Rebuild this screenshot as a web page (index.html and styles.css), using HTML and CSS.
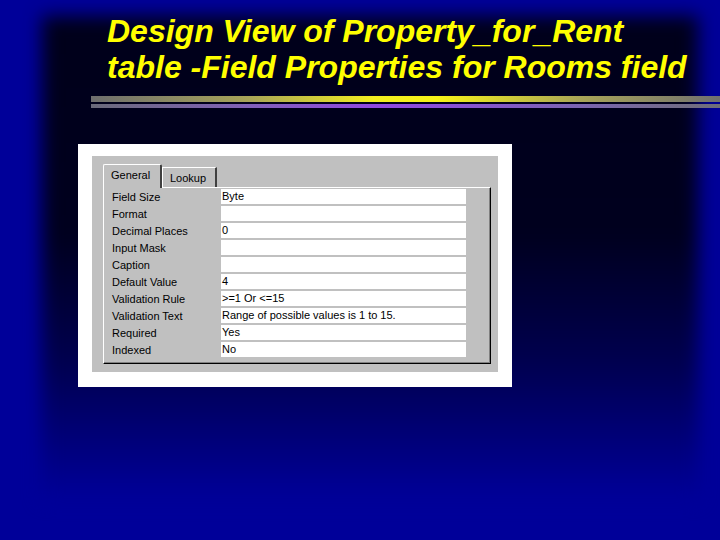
FILE: index.html
```html
<!DOCTYPE html>
<html>
<head>
<meta charset="utf-8">
<link rel="stylesheet" href="styles.css">
</head>
<body>
<div class="slide">
  <div class="content">
    <h1 class="title">Design View of Property_for_Rent<br>table -Field Properties for Rooms field</h1>
    <div class="bars">
      <div class="bar bar-yellow"></div>
      <div class="bar bar-purple"></div>
    </div>
    <div class="shot">
      <div class="dialog">
        <div class="tabs">
          <div class="tab tab-active">General</div>
          <div class="tab">Lookup</div>
        </div>
        <div class="panel">
          <div class="row"><span class="label">Field Size</span><span class="value">Byte</span></div>
          <div class="row"><span class="label">Format</span><span class="value"></span></div>
          <div class="row"><span class="label">Decimal Places</span><span class="value">0</span></div>
          <div class="row"><span class="label">Input Mask</span><span class="value"></span></div>
          <div class="row"><span class="label">Caption</span><span class="value"></span></div>
          <div class="row"><span class="label">Default Value</span><span class="value">4</span></div>
          <div class="row"><span class="label">Validation Rule</span><span class="value">&gt;=1 Or &lt;=15</span></div>
          <div class="row"><span class="label">Validation Text</span><span class="value">Range of possible values is 1 to 15.</span></div>
          <div class="row"><span class="label">Required</span><span class="value">Yes</span></div>
          <div class="row"><span class="label">Indexed</span><span class="value">No</span></div>
        </div>
      </div>
    </div>
  </div>
</div>
</body>
</html>
```

FILE: styles.css
```css
html, body {
  margin: 0;
  padding: 0;
  background: #000099;
}

.slide {
  position: relative;
  width: 720px;
  height: 540px;
  overflow: hidden;
  background: #000099;
}

.slide::before {
  content: "";
  position: absolute;
  left: 42px;
  top: 16px;
  right: 22px;
  bottom: 40px;
  background: linear-gradient(to bottom, #00001a 0%, #00001e 45%, #000050 72%, #000099 100%);
  filter: blur(9px);
}

.content {
  position: relative;
}

.title {
  margin: 0;
  padding: 13px 0 0 107px;
  font-family: "Liberation Sans", Arial, sans-serif;
  font-weight: bold;
  font-style: italic;
  font-size: 32px;
  line-height: 36px;
  color: #ffff00;
  white-space: nowrap;
}

.bars {
  margin: 11px 0 0 91px;
  display: flex;
  flex-direction: column;
  gap: 2px;
}

.bar-yellow {
  height: 6px;
  background: linear-gradient(to right, #6e6e6e 0%, #a8a458 25%, #f2ee20 45%, #f6f218 55%, #a8a458 78%, #707070 100%);
}

.bar-purple {
  height: 4px;
  background: linear-gradient(to right, #6a6a7a 0%, #8060b8 25%, #9048e0 45%, #8a4ed8 55%, #7a64b0 78%, #6e6e78 100%);
}

.shot {
  margin: 36px 0 0 78px;
  width: 434px;
  background: #ffffff;
  padding: 12px 14px 15px 14px;
  box-sizing: border-box;
}

.dialog {
  background: #c0c0c0;
  padding: 8px 7px 8px 11px;
  font-family: "Liberation Sans", Arial, sans-serif;
  font-size: 11px;
  color: #000;
}

.tabs {
  display: flex;
  align-items: flex-end;
  height: 23px;
}

.tab {
  height: 20px;
  line-height: 20px;
  padding: 0 7px;
  border-top: 1px solid #ffffff;
  border-left: 1px solid #ffffff;
  border-right: 2px solid #404040;
  box-sizing: border-box;
  width: 55px;
}

.tab-active {
  height: 24px;
  line-height: 20px;
  width: 59px;
  margin-bottom: -1px;
  background: #c0c0c0;
  position: relative;
  z-index: 1;
  border-radius: 2px 2px 0 0;
}

.panel {
  width: 388px;
  box-sizing: border-box;
  border-top: 1px solid #ffffff;
  border-left: 1px solid #ffffff;
  border-right: 1px solid #000000;
  border-bottom: 1px solid #000000;
  box-shadow: inset -1px -1px 0 #808080;
  padding: 1px 24px 4px 8px;
}

.row {
  display: grid;
  grid-template-columns: 109px 245px;
  height: 17px;
}

.label {
  line-height: 16px;
  white-space: nowrap;
}

.value {
  background: #ffffff;
  height: 15px;
  line-height: 15px;
  padding-left: 1px;
  white-space: nowrap;
}
```
